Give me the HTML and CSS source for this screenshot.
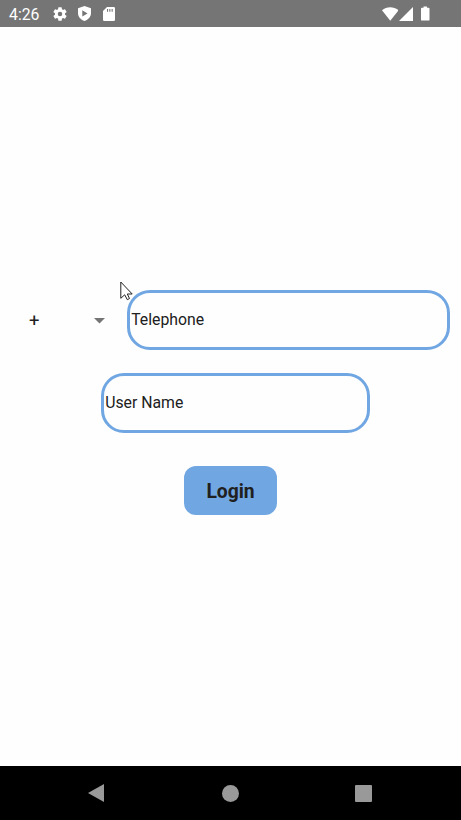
FILE: index.html
```html
<!DOCTYPE html>
<html lang="en">
<head>
<meta charset="utf-8">
<title>Login</title>
<link rel="stylesheet" href="styles.css">
</head>
<body>
<header class="status">
  <span class="time">4:26</span>
  <svg class="gear" viewBox="2 2 20 20"><path d="M19.14 12.94a7.07 7.07 0 0 0 0-1.88l2.03-1.58a.5.5 0 0 0 .12-.61l-1.92-3.32a.5.5 0 0 0-.59-.22l-2.39.96a7 7 0 0 0-1.62-.94l-.36-2.54a.5.5 0 0 0-.48-.41h-3.84a.5.5 0 0 0-.47.41l-.36 2.54a7.3 7.3 0 0 0-1.62.94l-2.39-.96a.5.5 0 0 0-.59.22L2.74 8.87a.5.5 0 0 0 .12.61l2.03 1.58a7.1 7.1 0 0 0 0 1.88l-2.03 1.58a.5.5 0 0 0-.12.61l1.92 3.32c.12.22.37.29.59.22l2.39-.96c.5.38 1.03.7 1.62.94l.36 2.54c.05.24.24.41.48.41h3.84c.24 0 .44-.17.47-.41l.36-2.54a7.3 7.3 0 0 0 1.62-.94l2.39.96c.22.08.47 0 .59-.22l1.92-3.32a.5.5 0 0 0-.12-.61zM12 15.2a3.2 3.2 0 1 1 0-6.4 3.2 3.2 0 0 1 0 6.4z"/></svg>
  <svg class="shield" viewBox="0 0 13 15"><path fill-rule="evenodd" d="M6.5 0 13 2.2V7c0 3.8-2.6 6.600-6.500 8C2.600 13.600 0 10.800 0 7V2.200zM4.300 4.200v6.400l5.200-3.200z"/></svg>
  <svg class="card" viewBox="0 0 12 14"><path fill-rule="evenodd" d="M4 0h6.700Q12 0 12 1.300v11.400Q12 14 10.700 14H1.300Q0 14 0 12.700V4zM4 2v2.700h1.100V2zm2.300 0v2.700h1.100V2zm2.300 0v2.700h1.100V2z"/></svg>
  <span class="spacer"></span>
  <svg class="wifi" viewBox="0 0 17 14"><path d="M0 3.200C4.500-1 12.500-1 17 3.200L8.500 14z"/></svg>
  <svg class="signal" viewBox="0 0 14 14"><path d="M14 0v14H0z"/></svg>
  <svg class="battery" viewBox="0 0 9 15"><path d="M2.700 0h3.600v1.500H8q1 0 1 1V14q0 1-1 1H1q-1 0-1-1V2.500q0-1 1-1h1.700z"/></svg>
</header>
<main class="form">
  <div class="phone-row">
    <div class="code"><span class="plus">+</span><svg class="arrow" viewBox="0 0 11 6"><path d="M0 0h11L5.500 5.500z"/></svg></div>
    <div class="field phone">Telephone</div>
    <svg class="cursor" viewBox="0 0 13 20"><path d="M.8 1v16.300l3.900-3.500 2.600 4.900 2.200-1.200-2.200-4.500h4.900z"/></svg>
  </div>
  <div class="field user">User Name</div>
  <div class="login">Login</div>
</main>
<nav class="navbar">
  <svg class="back" viewBox="0 0 16 18"><path d="M16 0v18L0 9z"/></svg>
  <span class="home"></span>
  <span class="recent"></span>
</nav>
</body>
</html>
```
FILE: styles.css
```css
* { box-sizing: border-box; }
body {
  margin: 0;
  height: 820px;
  display: flex;
  flex-direction: column;
  background: #fefefe;
  color: #202020;
  font-family: Roboto, sans-serif;
  font-size: 15.800px;
  overflow: hidden;
}
svg { display: block; flex: none; }
.status {
  height: 27px;
  background: #757575;
  color: #fff;
  fill: #fff;
  display: flex;
  align-items: center;
  padding: 0 31.500px 0 9px;
}
.time { width: 44px; line-height: 27px; padding-top: 1px; }
.gear { width: 14px; height: 14px; }
.shield { width: 13px; height: 15px; margin-left: 11px; }
.card { width: 12px; height: 14px; margin-left: 12px; }
.spacer { flex: 1; }
.wifi { width: 16.500px; height: 14px; }
.signal { width: 14px; height: 14px; margin: 0 8px 0 1px; }
.battery { width: 8.500px; height: 15px; }
.form {
  flex: 1;
  padding-top: 262.500px;
  display: flex;
  flex-direction: column;
}
.phone-row { display: flex; position: relative; }
.code {
  width: 127px;
  padding: 2px 22px 0 29px;
  display: flex;
  align-items: center;
  justify-content: space-between;
}
.plus { font-size: 18.500px; line-height: 20px; }
.arrow { width: 11px; height: 6px; fill: #757575; }
.field {
  height: 60px;
  border: 3px solid #70a6e2;
  border-radius: 23px;
  padding-left: 1.200px;
  line-height: 54px;
}
.phone { width: 322.500px; }
.user { width: 269px; margin: 23px 0 0 101px; }
.cursor {
  position: absolute;
  left: 120px;
  top: -8.500px;
  width: 13px;
  height: 20px;
  fill: #fff;
  stroke: #222;
  stroke-width: 1;
}
.login {
  width: 93px;
  height: 49px;
  margin: 33.500px 0 0 184px;
  border-radius: 12px;
  background: #70a6e2;
  font-size: 19.300px;
  font-weight: 700;
  line-height: 51px;
  text-align: center;
}
.navbar {
  height: 54px;
  background: #000;
  display: flex;
  align-items: center;
  padding-left: 88px;
}
.back { width: 16px; height: 18px; fill: #999; }
.home { width: 17px; height: 17px; margin-left: 118px; border-radius: 50%; background: #999; }
.recent { width: 17px; height: 17px; margin-left: 116px; border-radius: 1px; background: #999; }
```
